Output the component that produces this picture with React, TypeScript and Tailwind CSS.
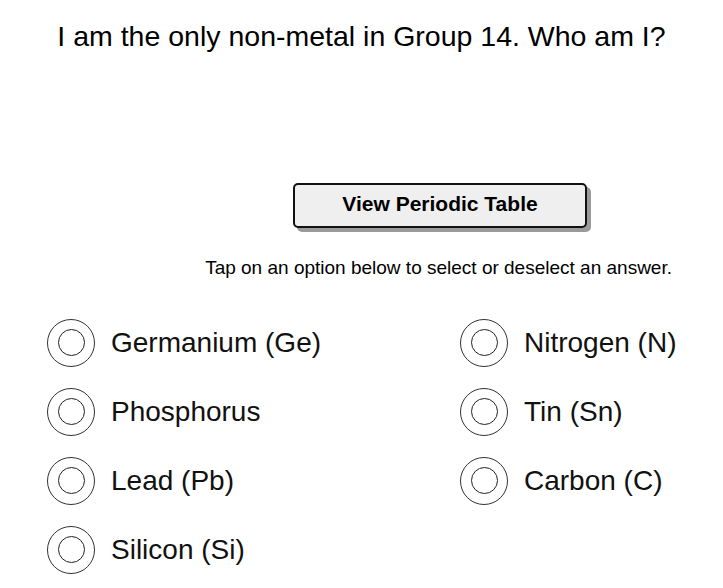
import React from "react";

const left = ["Germanium (Ge)", "Phosphorus", "Lead (Pb)", "Silicon (Si)"];
const right = ["Nitrogen (N)", "Tin (Sn)", "Carbon (C)"];

function Radio() {
  return (
    <span className="flex h-[48px] w-[48px] shrink-0 items-center justify-center rounded-full border border-[#333]">
      <span className="h-[27px] w-[27px] rounded-full border-[1.5px] border-[#222]" />
    </span>
  );
}

function Option({ label }: { label: string }) {
  return (
    <button type="button" className="flex h-[69px] items-center gap-[16px] text-left">
      <Radio />
      <span className="text-[28px] leading-none text-[#111]">{label}</span>
    </button>
  );
}

export default function App() {
  return (
    <main className="min-h-[588px] w-[723px] bg-white text-black" style={{ fontFamily: '"Liberation Sans", Arial, sans-serif' }}>
      <h1 className="pt-[19px] text-center text-[28.5px] leading-[34px]">
        I am the only non-metal in Group 14. Who am I?
      </h1>

      <div className="mt-[130px] flex justify-end pr-[136px]">
        <button
          type="button"
          className="h-[45px] w-[294px] rounded-[5px] border-2 border-[#111] bg-[#efefef] pb-[4px] text-[21px] font-bold shadow-[4px_4px_0_#9a9a9a]"
        >
          View Periodic Table
        </button>
      </div>

      <p className="mt-[29px] pr-[51px] text-right text-[19px] leading-[22px]">
        Tap on an option below to select or deselect an answer.
      </p>

      <div className="mt-[29px] flex pl-[47px]">
        <div className="flex w-[413px] flex-col">
          {left.map((l) => (
            <Option key={l} label={l} />
          ))}
        </div>
        <div className="flex flex-col">
          {right.map((l) => (
            <Option key={l} label={l} />
          ))}
        </div>
      </div>
    </main>
  );
}
